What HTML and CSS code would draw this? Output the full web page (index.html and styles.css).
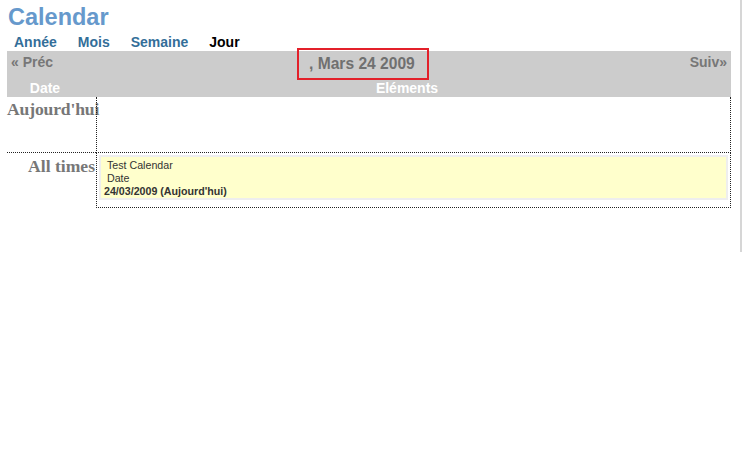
FILE: index.html
```html
<!DOCTYPE html>
<html lang="fr">
<head>
<meta charset="utf-8">
<title>Calendar</title>
<link rel="stylesheet" href="styles.css">
</head>
<body>
<div class="edge"></div>
<div class="page">
  <h1 class="title">Calendar</h1>
  <div class="nav">
    <a href="#" class="nav-link">Année</a>
    <a href="#" class="nav-link">Mois</a>
    <a href="#" class="nav-link">Semaine</a>
    <span class="nav-link current">Jour</span>
  </div>
  <div class="bar">
    <div class="bar-top">
      <div class="prev">« Préc</div>
      <div class="current-date">, Mars 24 2009</div>
      <div class="next">Suiv»</div>
    </div>
    <div class="bar-head">
      <div>Date</div>
      <div>Eléments</div>
    </div>
  </div>
  <div class="grid">
    <div class="label label-today">Aujourd'hui</div>
    <div class="cell cell-today"></div>
    <div class="label label-all">All times</div>
    <div class="cell cell-all">
      <div class="event">
        <div class="ev-line">Test Calendar</div>
        <div class="ev-line">Date</div>
        <div class="ev-date">24/03/2009 (Aujourd'hui)</div>
      </div>
    </div>
  </div>
</div>
</body>
</html>
```

FILE: styles.css
```css
html, body {
  margin: 0;
  padding: 0;
  background: #ffffff;
}
body {
  font-family: "Liberation Sans", Arial, sans-serif;
  position: relative;
  min-height: 450px;
}
.edge {
  position: absolute;
  left: 740px;
  top: 0;
  width: 2px;
  height: 252px;
  background: #d6d6d6;
}
.page {
  margin-left: 7px;
  width: 724px;
}
.title {
  margin: 0;
  padding: 3px 0 0 1px;
  font-size: 23.5px;
  line-height: 28px;
  font-weight: bold;
  color: #6699cc;
}
.nav {
  display: flex;
  gap: 21px;
  padding: 2px 0 0 7px;
  height: 18px;
  line-height: 18px;
  font-size: 14px;
  font-weight: bold;
}
.nav-link {
  color: #336e99;
  text-decoration: none;
}
.nav-link.current {
  color: #000000;
}
.bar {
  background: #cccccc;
}
.bar-top {
  display: grid;
  grid-template-columns: 290px 132px 1fr;
  height: 28px;
}
.prev, .next {
  padding-top: 2px;
  font-size: 14px;
  line-height: 18px;
  font-weight: bold;
  color: #777777;
}
.prev {
  padding-left: 4px;
}
.next {
  text-align: right;
  padding-right: 4px;
}
.current-date {
  box-sizing: border-box;
  height: 32px;
  margin-top: -3px;
  border: 2px solid #e3202a;
  padding-left: 10px;
  font-size: 15.6px;
  line-height: 28px;
  font-weight: bold;
  color: #707070;
  white-space: nowrap;
}
.bar-head {
  display: grid;
  grid-template-columns: 76px 1fr;
  height: 18px;
  line-height: 18px;
  font-size: 14px;
  font-weight: bold;
  color: #ffffff;
  text-align: center;
}
.grid {
  display: grid;
  grid-template-columns: 89px 635px;
}
.label {
  font-family: "Liberation Serif", "Times New Roman", serif;
  font-weight: bold;
  font-size: 17.6px;
  color: #777777;
  white-space: nowrap;
}
.label-today {
  padding-top: 2px;
  letter-spacing: -0.15px;
  border-bottom: 1px dotted #222222;
}
.label-all {
  padding-top: 3px;
  padding-right: 1px;
  text-align: right;
}
.cell {
  border-left: 1px dotted #222222;
  border-right: 1px dotted #222222;
  border-bottom: 1px dotted #222222;
}
.cell-today {
  height: 55px;
}
.cell-all {
  padding: 2px 2px 7px 2px;
}
.event {
  background: #ffffcc;
  border: 2px solid #eeeeee;
  padding-top: 2px;
  font-size: 10.67px;
  line-height: 13px;
  color: #333333;
}
.ev-line {
  padding-left: 6px;
}
.ev-date {
  padding-left: 3px;
  font-weight: bold;
}
```
